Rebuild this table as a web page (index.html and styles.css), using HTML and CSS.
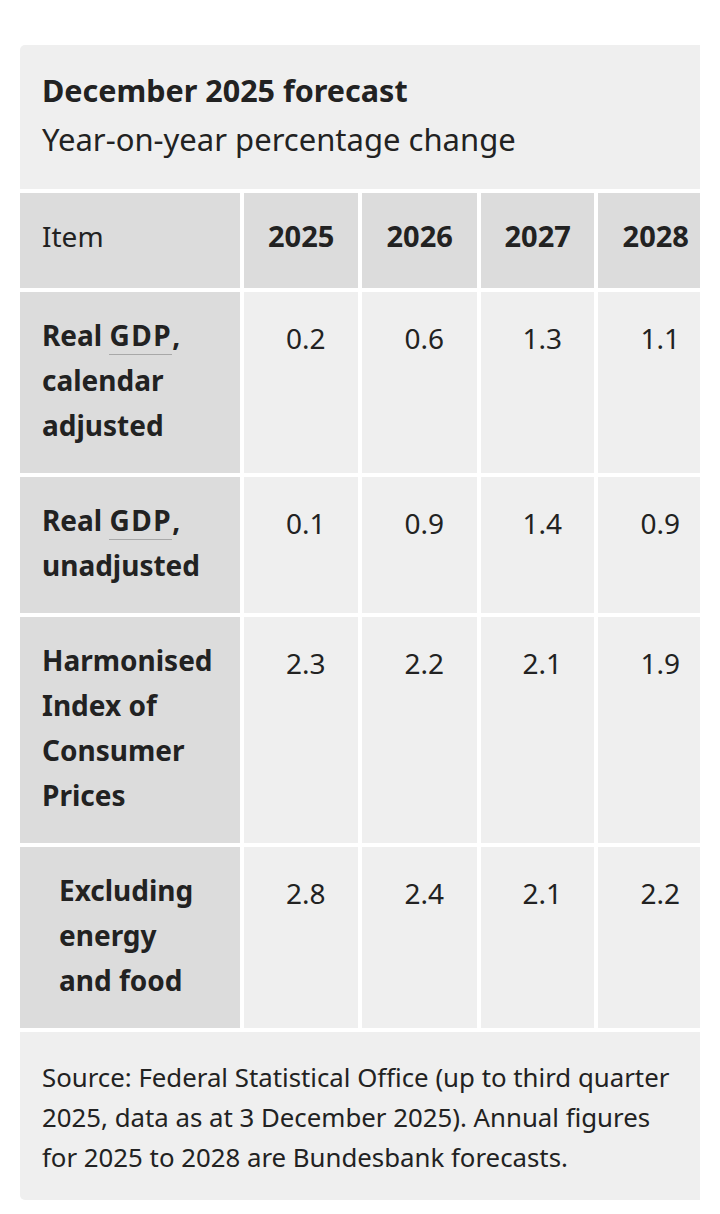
FILE: index.html
```html
<!DOCTYPE html>
<html lang="en">
<head>
<meta charset="utf-8">
<title>December 2025 forecast</title>
<link rel="stylesheet" href="styles.css">
</head>
<body>
<div class="viewport">
  <div class="card">
    <div class="caption">
      <div class="title">December 2025 forecast</div>
      <div class="subtitle">Year-on-year percentage change</div>
    </div>
    <table class="data">
      <colgroup>
        <col class="c-item"><col class="c-year"><col class="c-year"><col class="c-year3"><col class="c-year">
      </colgroup>
      <thead>
        <tr>
          <th class="head item-head">Item</th>
          <th class="head year">2025</th>
          <th class="head year">2026</th>
          <th class="head year">2027</th>
          <th class="head year">2028</th>
        </tr>
      </thead>
      <tbody>
        <tr>
          <th class="label">Real <abbr>GDP</abbr>, calendar adjusted</th>
          <td class="num">0.2</td><td class="num">0.6</td><td class="num">1.3</td><td class="num">1.1</td>
        </tr>
        <tr>
          <th class="label">Real <abbr>GDP</abbr>, unadjusted</th>
          <td class="num">0.1</td><td class="num">0.9</td><td class="num">1.4</td><td class="num">0.9</td>
        </tr>
        <tr>
          <th class="label">Harmonised Index of Consumer Prices</th>
          <td class="num">2.3</td><td class="num">2.2</td><td class="num">2.1</td><td class="num">1.9</td>
        </tr>
        <tr>
          <th class="label sub">Excluding energy and food</th>
          <td class="num">2.8</td><td class="num">2.4</td><td class="num">2.1</td><td class="num">2.2</td>
        </tr>
      </tbody>
    </table>
    <div class="footer">Source: Federal Statistical Office (up to third quarter 2025, data as at 3 December 2025). Annual figures for 2025 to 2028 are Bundesbank forecasts.</div>
  </div>
</div>
</body>
</html>
```
FILE: styles.css
```css
html, body {
  margin: 0;
  padding: 0;
  background: #ffffff;
}

body {
  font-family: "Noto Sans", "Open Sans", sans-serif;
  color: #222222;
  font-size: 28px;
  line-height: 45px;
}

.viewport {
  margin: 45px 0 0 20px;
  width: 680px;
  overflow: hidden;
}

.card {
  width: 690px;
  background: #efefef;
  border-radius: 5px 0 0 5px;
}

.caption {
  padding: 21px 22px 25px 22px;
}

.title {
  font-size: 30.5px;
  font-weight: 700;
  line-height: 49px;
}

.subtitle {
  font-size: 31px;
  line-height: 49px;
}

.data {
  border-collapse: separate;
  border-spacing: 4px;
  margin: 0 0 0 -4px;
  background: #ffffff;
  table-layout: fixed;
  width: 701px;
}

.c-item { width: 219px; }
.c-year { width: 114px; }
.c-year3 { width: 113px; }

.data .head {
  background: #dcdcdc;
  vertical-align: top;
  padding: 21px 0 29px 0;
}

.data .item-head {
  font-weight: 400;
  text-align: left;
  padding-left: 22px;
}

.data .year {
  font-size: 29px;
  font-weight: 700;
  text-align: center;
  padding-top: 20px;
}

.data .label {
  background: #dcdcdc;
  font-weight: 700;
  text-align: left;
  vertical-align: top;
  padding: 21px 24px 25px 22px;
}

.data .label.sub {
  padding-left: 39px;
}

.data .num {
  background: #efefef;
  text-align: center;
  vertical-align: top;
  font-weight: 400;
  padding: 24px 0 22px 9px;
}

abbr {
  text-decoration: none;
  letter-spacing: 1.5px;
  border-bottom: 1px solid #a8a8a8;
}

.footer {
  font-size: 25.8px;
  padding: 25px 34px 23px 22px;
  line-height: 40px;
}
```
